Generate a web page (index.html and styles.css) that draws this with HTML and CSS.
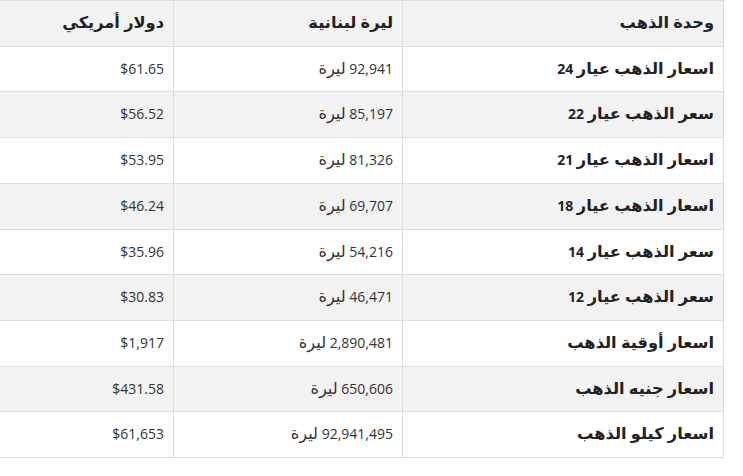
FILE: index.html
```html
<!DOCTYPE html>
<html lang="ar" dir="rtl">
<head>
<meta charset="utf-8">
<title>أسعار الذهب</title>
<link rel="stylesheet" href="styles.css">
</head>
<body>
<table class="prices">
  <thead>
    <tr><th class="c-unit"><span class="ar">وحدة الذهب</span></th><th class="c-lbp"><span class="ar">ليرة لبنانية</span></th><th class="c-usd"><span class="ar">دولار أمريكي</span></th></tr>
  </thead>
  <tbody>
    <tr><td class="name"><span class="ar">اسعار الذهب عيار</span> 24</td><td>92,941 <span class="ar">ليرة</span></td><td>$61.65</td></tr>
    <tr><td class="name"><span class="ar">سعر الذهب عيار</span> 22</td><td>85,197 <span class="ar">ليرة</span></td><td>$56.52</td></tr>
    <tr><td class="name"><span class="ar">اسعار الذهب عيار</span> 21</td><td>81,326 <span class="ar">ليرة</span></td><td>$53.95</td></tr>
    <tr><td class="name"><span class="ar">اسعار الذهب عيار</span> 18</td><td>69,707 <span class="ar">ليرة</span></td><td>$46.24</td></tr>
    <tr><td class="name"><span class="ar">سعر الذهب عيار</span> 14</td><td>54,216 <span class="ar">ليرة</span></td><td>$35.96</td></tr>
    <tr><td class="name"><span class="ar">سعر الذهب عيار</span> 12</td><td>46,471 <span class="ar">ليرة</span></td><td>$30.83</td></tr>
    <tr><td class="name"><span class="ar">اسعار أوقية الذهب</span></td><td>2,890,481 <span class="ar">ليرة</span></td><td>$1,917</td></tr>
    <tr><td class="name"><span class="ar">اسعار جنيه الذهب</span></td><td>650,606 <span class="ar">ليرة</span></td><td>$431.58</td></tr>
    <tr><td class="name"><span class="ar">اسعار كيلو الذهب</span></td><td>92,941,495 <span class="ar">ليرة</span></td><td>$61,653</td></tr>
  </tbody>
</table>
</body>
</html>
```
FILE: styles.css
```css
html, body {
  margin: 0;
  padding: 0;
  background: #ffffff;
}
body {
  font-family: "Open Sans", "DejaVu Sans", sans-serif;
  font-size: 14px;
  color: #333333;
}
.prices {
  border-collapse: collapse;
  width: 724px;
  table-layout: fixed;
  direction: rtl;
  margin-left: 0;
  margin-right: auto;
}
.prices th,
.prices td {
  border: 1px solid #dddddd;
  padding: 11px 9px;
  line-height: 22.7px;
  height: 22.7px;
  text-align: right;
  white-space: nowrap;
  vertical-align: middle;
}
.prices th:last-child,
.prices td:last-child {
  border-left: none;
}
.prices th {
  background: #f2f2f2;
  color: #222222;
  font-weight: 700;
}
.ar {
  font-size: 1.16em;
  line-height: 1;
}
.c-unit { width: 302px; }
.c-lbp { width: 210px; }
.c-usd { width: auto; }
.prices tbody tr:nth-child(even) td {
  background: #f2f2f2;
}
.prices td.name {
  font-weight: 700;
  color: #222222;
}
```
